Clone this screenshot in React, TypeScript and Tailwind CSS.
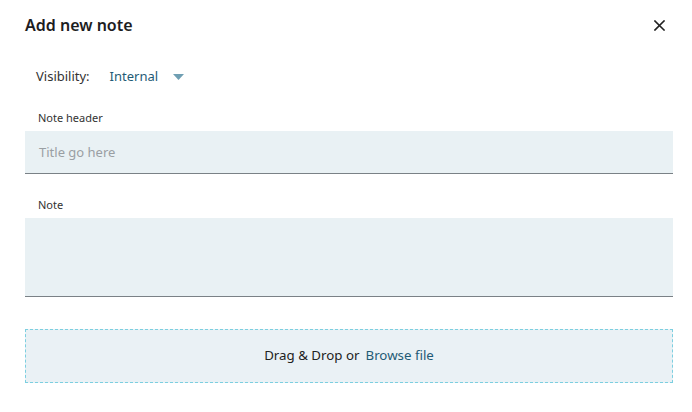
import React from "react";

const AddNoteDialog = () => {
  return (
    <div className="w-[692px] h-[412px] bg-white pl-[25px] pr-[19px] font-['Noto_Sans',sans-serif] text-[#222]">
      {/* Encabezado */}
      <div className="h-[50px] flex items-center justify-between">
        <h2 className="text-[16px] font-semibold text-[#1d1d1f] leading-6">Add new note</h2>
        <button className="w-[20px] h-[20px] mr-[4px] flex items-center justify-center text-[#222]">
          <svg width="11" height="11" viewBox="0 0 11 11" fill="none">
            <path d="M1 1L10 10M10 1L1 10" stroke="currentColor" strokeWidth="1.6" strokeLinecap="square" />
          </svg>
        </button>
      </div>

      {/* Visibilidad */}
      <div className="mt-[17px] h-[20px] flex items-center text-[13px] pl-[11px]">
        <span className="text-[#333]">Visibility:</span>
        <span className="ml-[20px] text-[#1f5b76]">Internal</span>
        <svg className="ml-[15px]" width="11" height="6" viewBox="0 0 11 6">
          <path d="M0 0H11L5.5 6Z" fill="#6f9fb3" />
        </svg>
      </div>

      {/* Note header */}
      <label className="block mt-[23px] h-[16px] leading-4 text-[11px] text-[#333] pl-[13px]">Note header</label>
      <div className="mt-[5px] h-[43px] bg-[#e9f1f4] border-b-[1.5px] border-[#7a8186] flex items-center pl-[14px] pt-[2px]">
        <span className="text-[13px] text-[#9a9fa3]">Title go here</span>
      </div>

      {/* Note */}
      <label className="block mt-[23px] h-[16px] leading-4 text-[11px] text-[#333] pl-[13px]">Note</label>
      <div className="mt-[5px] h-[79px] bg-[#e9f1f4] border-b-[1.5px] border-[#7a8186]" />

      {/* Zona de carga */}
      <div className="mt-[32px] h-[54px] bg-[#eaf1f5] border border-dashed border-[#7ccfe0] flex items-center justify-center text-[13.3px]">
        <span className="text-[#222]">Drag &amp; Drop or</span>
        <span className="ml-[6px] text-[#1f5b76]">Browse file</span>
      </div>
    </div>
  );
};

export default function App() {
  return <AddNoteDialog />;
}
